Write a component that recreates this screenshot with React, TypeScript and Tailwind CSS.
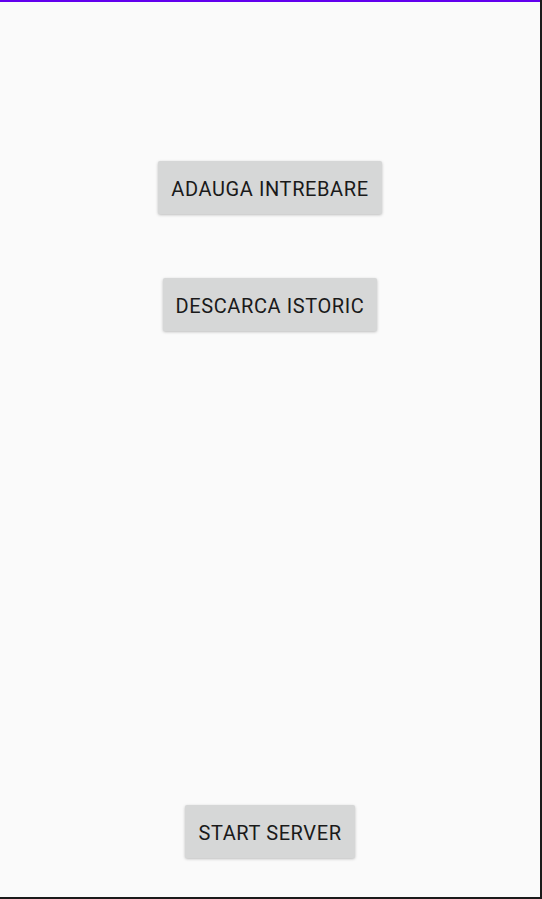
export default function App() {
  const btn =
    "h-[53px] rounded-[2px] bg-[#d6d7d7] px-[13px] pt-[2px] text-[20px] font-normal tracking-[0.03em] text-[#1a1a1a] shadow-[0_1px_3px_rgba(0,0,0,0.25)]";

  return (
    <div className="flex h-[899px] w-[542px] flex-col border-r-2 border-b-2 border-[#1a1a1a] bg-[#fafafa] font-['Roboto',sans-serif]">
      <div className="h-[2px] w-full bg-[#6200ee]" />
      <div className="flex flex-1 flex-col items-center pt-[159px] pb-[39px]">
        <button className={btn}>ADAUGA INTREBARE</button>
        <button className={`${btn} mt-[64px]`}>DESCARCA ISTORIC</button>
        <div className="flex-1" />
        <button className={btn}>START SERVER</button>
      </div>
    </div>
  );
}
